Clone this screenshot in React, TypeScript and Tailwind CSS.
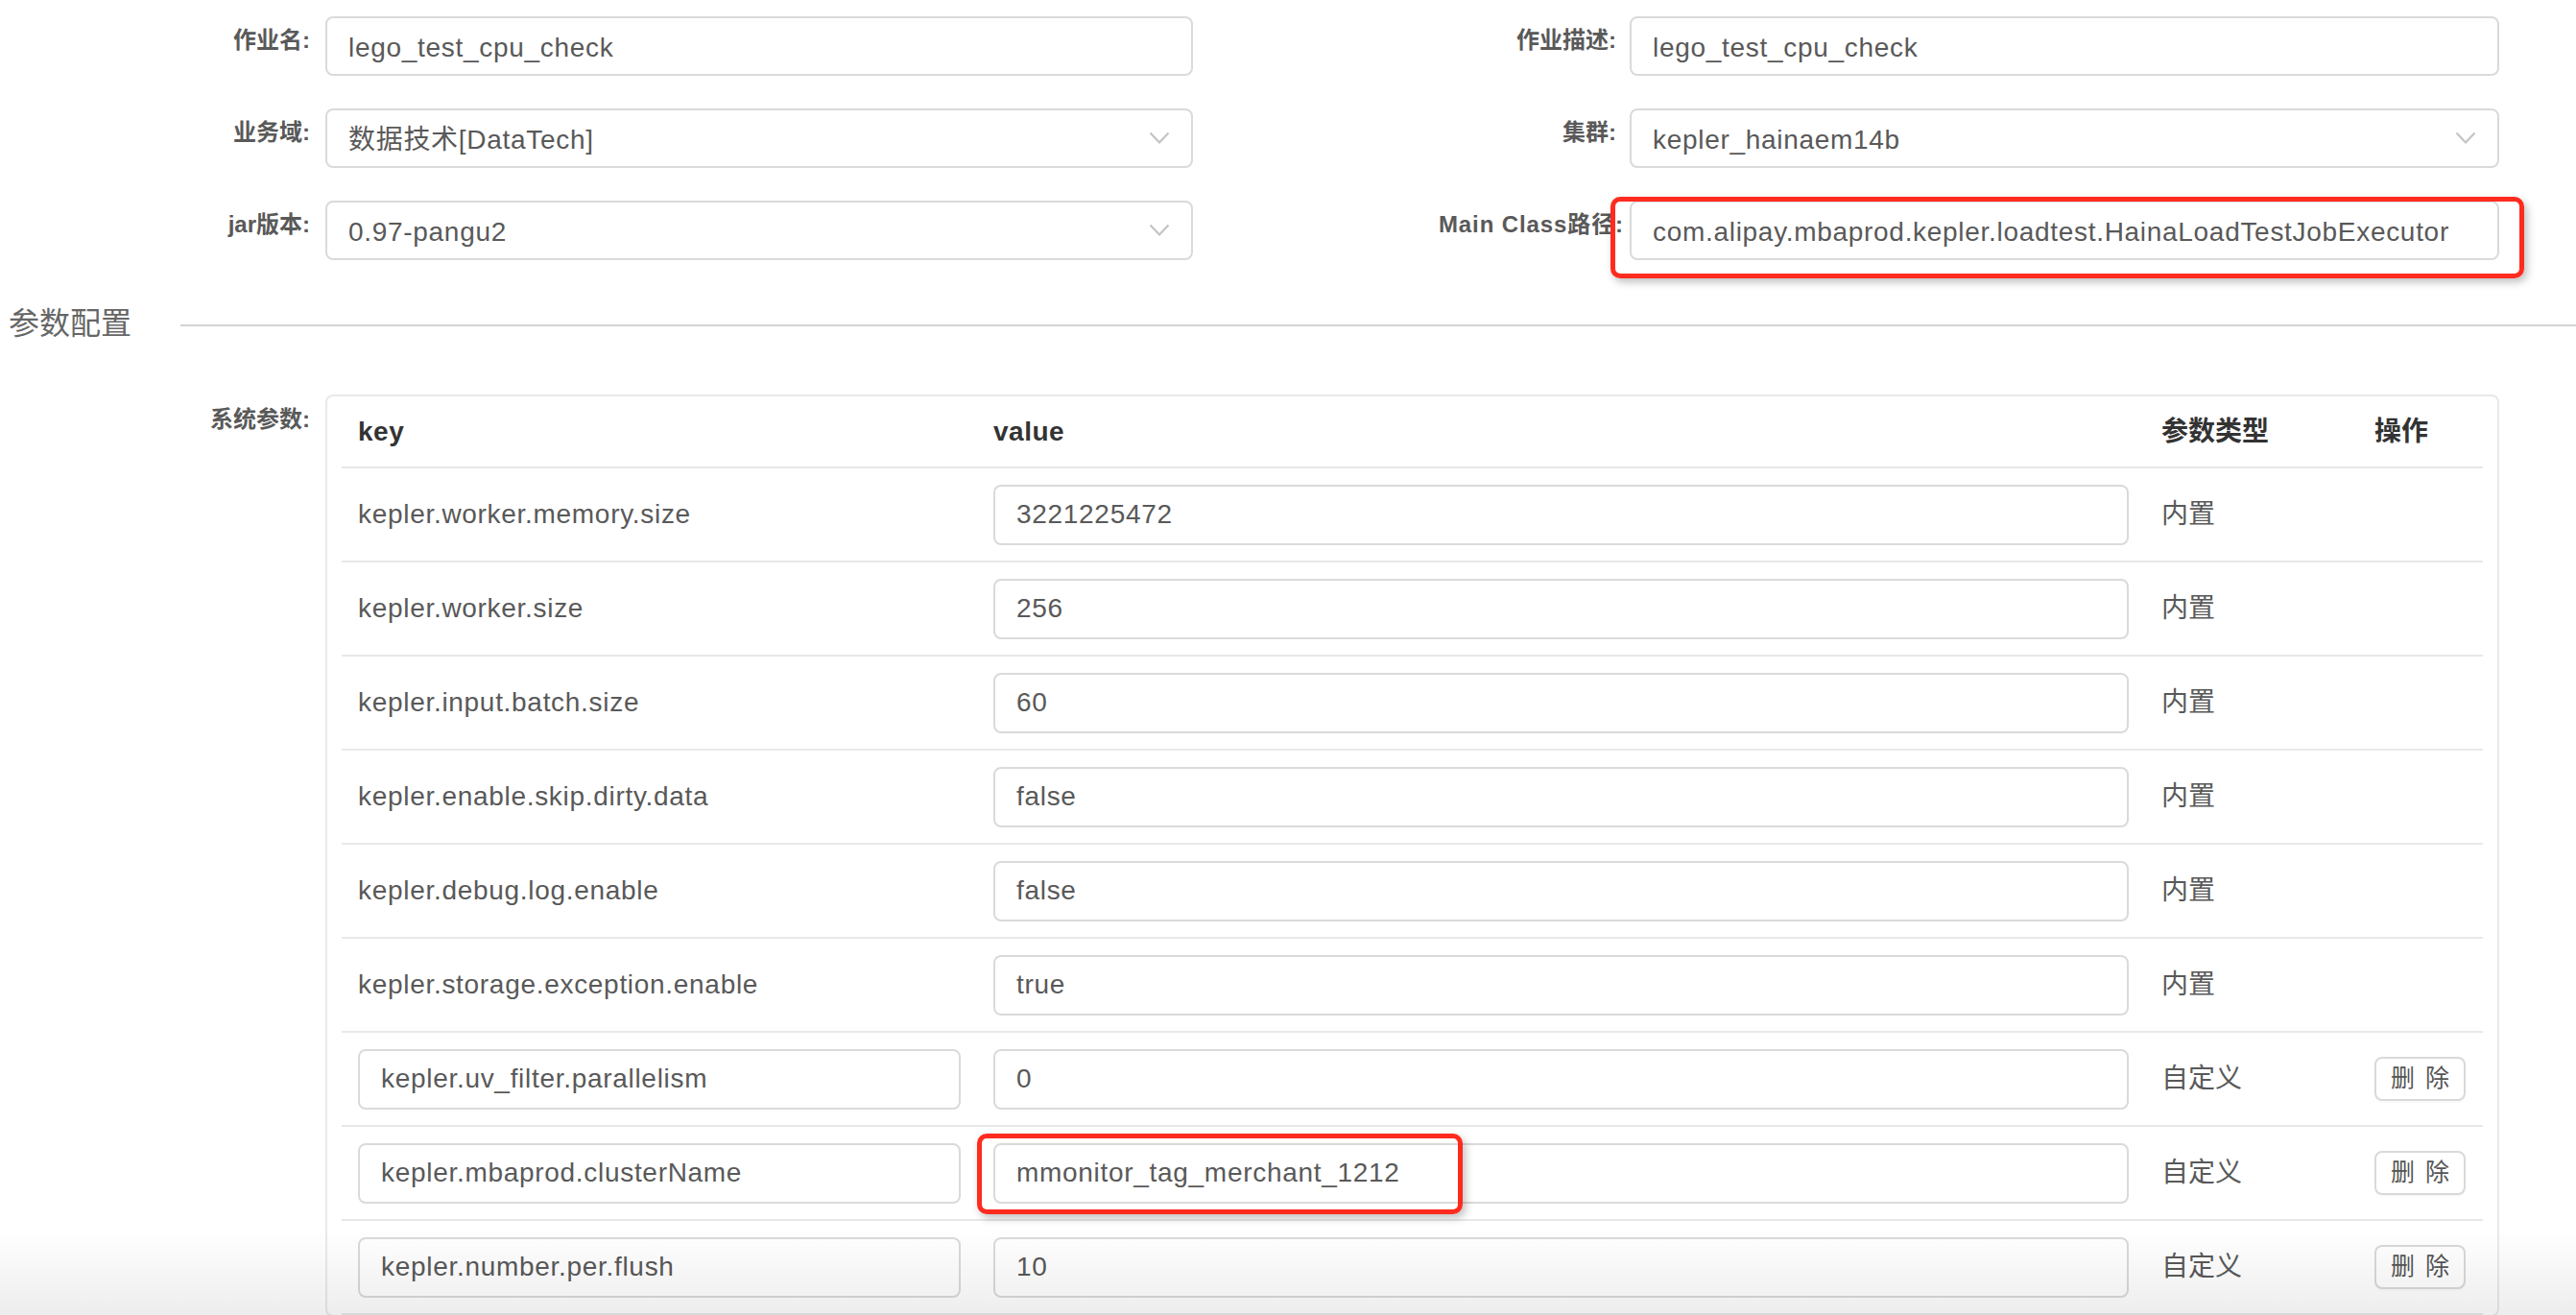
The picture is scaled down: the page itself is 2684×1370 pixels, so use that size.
import React from "react";

const FONT = "font-['Liberation_Sans','Noto_Sans_CJK_SC',sans-serif]";

function Chevron() {
  return (
    <svg width="22" height="14" viewBox="0 0 22 14" className="shrink-0">
      <polyline points="1.5,1.5 11,11.5 20.5,1.5" fill="none" stroke="#c4c4c4" strokeWidth="2.2" />
    </svg>
  );
}

function TextBox({
  value,
  select,
  className = "",
  top,
}: {
  value: string;
  select?: boolean;
  className?: string;
  top?: boolean;
}) {
  return (
    <div
      className={`flex h-[62px] items-center justify-between rounded-[8px] border-2 border-[#dadada] bg-white pl-[22px] pr-[22px] text-[28px] tracking-[0.7px] text-[#595959] ${className}`}
    >
      <span className={`whitespace-nowrap ${top ? "pt-[3px]" : ""}`}>{value}</span>
      {select && <Chevron />}
    </div>
  );
}

function RedMark({ className }: { className: string }) {
  return (
    <div
      className={`pointer-events-none absolute rounded-[10px] border-[5px] border-[#ff2b1f] shadow-[3px_4px_8px_rgba(0,0,0,0.25)] ${className}`}
    />
  );
}

function FormRow({
  l1,
  v1,
  s1,
  l2,
  v2,
  s2,
  mark,
  l2Bold,
}: {
  l1: string;
  v1: string;
  s1?: boolean;
  l2: string;
  v2: string;
  s2?: boolean;
  mark?: boolean;
  l2Bold?: boolean;
}) {
  return (
    <div className="flex h-[62px]">
      <div className="flex w-[1243px]">
        <div className="w-[339px] shrink-0 pr-[16px] pt-[9px] text-right text-[24px] font-semibold leading-[32px] text-[#595959]">
          {l1}
        </div>
        <TextBox value={v1} select={s1} className="flex-1" top />
      </div>
      <div className="flex">
        <div
          className={`w-[455px] shrink-0 whitespace-nowrap pt-[9px] text-right text-[24px] font-semibold leading-[32px] text-[#595959] ${
            l2Bold ? "pr-[6px] tracking-[0.9px]" : "pr-[14px]"
          }`}
        >
          {l2}
        </div>
        <div className="relative w-[906px]">
          <TextBox value={v2} select={s2} top />
          {mark && <RedMark className="-left-[20px] -top-[4px] h-[85px] w-[952px]" />}
        </div>
      </div>
    </div>
  );
}

type Row = { key: string; value: string; custom?: boolean; mark?: boolean };

const rows: Row[] = [
  { key: "kepler.worker.memory.size", value: "3221225472" },
  { key: "kepler.worker.size", value: "256" },
  { key: "kepler.input.batch.size", value: "60" },
  { key: "kepler.enable.skip.dirty.data", value: "false" },
  { key: "kepler.debug.log.enable", value: "false" },
  { key: "kepler.storage.exception.enable", value: "true" },
  { key: "kepler.uv_filter.parallelism", value: "0", custom: true },
  { key: "kepler.mbaprod.clusterName", value: "mmonitor_tag_merchant_1212", custom: true, mark: true },
  { key: "kepler.number.per.flush", value: "10", custom: true },
];

const GRID = "grid grid-cols-[662px_1217px_222px_1fr]";

export default function App() {
  return (
    <div className={`relative h-[1370px] w-[2684px] overflow-hidden bg-white ${FONT}`}>
      <div className="flex flex-col gap-[34px] pt-[17px]">
        <FormRow l1="作业名:" v1="lego_test_cpu_check" l2="作业描述:" v2="lego_test_cpu_check" />
        <FormRow l1="业务域:" v1="数据技术[DataTech]" s1 l2="集群:" v2="kepler_hainaem14b" s2 />
        <FormRow
          l1="jar版本:"
          v1="0.97-pangu2"
          s1
          l2="Main Class路径:"
          v2="com.alipay.mbaprod.kepler.loadtest.HainaLoadTestJobExecutor"
          mark
          l2Bold
        />
      </div>

      <div className="mt-[46px] flex h-[40px] items-center">
        <div className="pl-[9px] text-[32px] leading-[40px] text-[#666666]">参数配置</div>
        <div className="ml-[51px] mt-[4px] h-[2px] flex-1 bg-[#d3d3d3]" />
      </div>

      <div className="mt-[54px] flex">
        <div className="w-[339px] shrink-0 pr-[16px] pt-[10px] text-right text-[24px] font-semibold leading-[32px] text-[#595959]">
          系统参数:
        </div>
        <div className="w-[2265px] rounded-[8px] border-2 border-[#e9e9e9] px-[15px]">
          <div className={`${GRID} h-[75px] items-center border-b-2 border-[#e8e8e8] text-[28px] font-bold text-[#333333]`}>
            <div className="px-[17px] tracking-[0.5px]">key</div>
            <div className="px-[17px] tracking-[0.5px]">value</div>
            <div className="px-[17px]">参数类型</div>
            <div className="px-[17px]">操作</div>
          </div>
          {rows.map((r) => (
            <div
              key={r.key}
              className={`${GRID} h-[98px] items-center border-b-2 border-[#e8e8e8] text-[28px] text-[#595959]`}
            >
              <div className="px-[17px]">
                {r.custom ? (
                  <TextBox value={r.key} className="h-[63px]" />
                ) : (
                  <span className="tracking-[0.7px]">{r.key}</span>
                )}
              </div>
              <div className="px-[17px]">
                <div className="relative">
                  <TextBox value={r.value} className="h-[63px]" />
                  {r.mark && <RedMark className="-left-[17px] -top-[10px] h-[84px] w-[506px]" />}
                </div>
              </div>
              <div className="px-[17px]">{r.custom ? "自定义" : "内置"}</div>
              <div className="px-[17px]">
                {r.custom && (
                  <div className="flex h-[46px] w-[95px] items-center justify-center rounded-[8px] border-2 border-[#d9d9d9] bg-white pl-[2px] text-[25px] tracking-[2px] text-[#555555] shadow-[0_2px_0_rgba(0,0,0,0.02)]">
                    删 除
                  </div>
                )}
              </div>
            </div>
          ))}
        </div>
      </div>

      <div className="pointer-events-none absolute bottom-0 left-0 right-0 h-[90px] bg-linear-to-b from-transparent to-black/[0.07]" />
    </div>
  );
}
